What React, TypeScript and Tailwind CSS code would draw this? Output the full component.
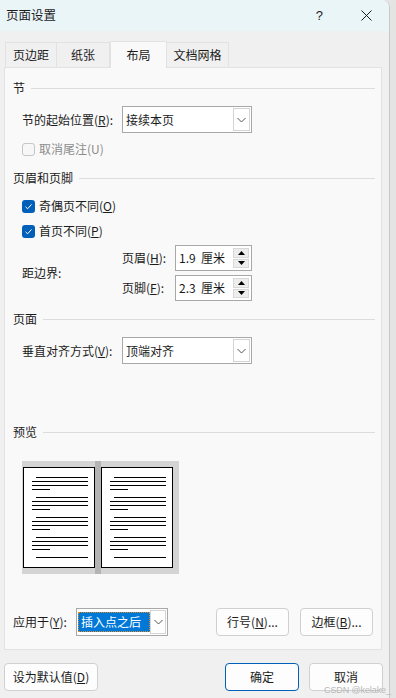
import React from 'react';

const font = { fontFamily: '"Noto Sans CJK SC", "Noto Sans", sans-serif' };

function Heading({ text, mt }: { text: string; mt: string }) {
  return (
    <div className={`flex items-center h-[16px] pl-[8px] pr-[6px] gap-[6px] ${mt}`}>
      <span className="shrink-0">{text}</span>
      <div className="flex-1 h-px bg-[#dcdcdc]" />
    </div>
  );
}

function Check({ checked, disabled }: { checked?: boolean; disabled?: boolean }) {
  if (checked) {
    return (
      <span className="w-[13px] h-[13px] rounded-[3px] bg-[#005fb8] flex items-center justify-center shrink-0">
        <svg width="9" height="9" viewBox="0 0 9 9">
          <path d="M1.5 4.8 L3.6 6.8 L7.5 2.4" stroke="#fff" strokeWidth="1" fill="none" />
        </svg>
      </span>
    );
  }
  return (
    <span
      className={`w-[13px] h-[13px] rounded-[3px] border shrink-0 ${
        disabled ? 'border-[#c6c6c6] bg-[#f7f7f7]' : 'border-[#8a8a8a] bg-white'
      }`}
    />
  );
}

function Chevron() {
  return (
    <svg width="9" height="6" viewBox="0 0 9 6">
      <path d="M0.5 1 L4.5 5 L8.5 1" stroke="#555" strokeWidth="1" fill="none" />
    </svg>
  );
}

function Select({ value, w }: { value: string; w: string }) {
  return (
    <div className={`flex h-[27px] ${w} border border-[#a8a8a8] bg-white`}>
      <span className="flex-1 flex items-center pl-[3px]">{value}</span>
      <span className="w-[17px] my-[1px] mr-[1px] border border-[#d4d4d4] bg-white flex items-center justify-center">
        <Chevron />
      </span>
    </div>
  );
}

function Spin({ value }: { value: string }) {
  return (
    <div className="flex h-[26px] w-[77px] border border-[#a8a8a8] bg-white">
      <span className="flex-1 flex items-center pl-[3px] whitespace-pre">{value}</span>
      <div className="w-[16px] flex flex-col gap-px py-[2px] mr-[2px]">
        <span className="flex-1 bg-[#ededed] border border-[#d8d8d8] flex items-center justify-center">
          <svg width="7" height="4" viewBox="0 0 7 4"><path d="M0 4 L3.5 0 L7 4Z" fill="#000" /></svg>
        </span>
        <span className="flex-1 bg-[#ededed] border border-[#d8d8d8] flex items-center justify-center">
          <svg width="7" height="4" viewBox="0 0 7 4"><path d="M0 0 L3.5 4 L7 0Z" fill="#000" /></svg>
        </span>
      </div>
    </div>
  );
}

function Page() {
  const groups = [10, 30, 50, 70];
  return (
    <div className="w-[72px] h-[101px] bg-white border border-black mt-[6px] shrink-0">
      <svg width="70" height="99" viewBox="0 0 70 99">
        {groups.map((g) => (
          <g key={g} stroke="#000" strokeWidth="1">
            <line x1="12" x2="64" y1={g - 0.5} y2={g - 0.5} />
            <line x1="8" x2="64" y1={g + 3.5} y2={g + 3.5} />
            <line x1="8" x2="64" y1={g + 7.5} y2={g + 7.5} />
            <line x1="8" x2="26" y1={g + 11.5} y2={g + 11.5} />
          </g>
        ))}
        <line x1="12" x2="64" y1="89.5" y2="89.5" stroke="#000" strokeWidth="1" />
      </svg>
    </div>
  );
}

function Btn({ label, w, primary }: { label: React.ReactNode; w: string; primary?: boolean }) {
  return (
    <button
      className={`h-[28px] ${w} rounded-[4px] border bg-[#fdfdfd] flex items-center justify-center ${
        primary ? 'border-[#005fb8]' : 'border-[#d0d0d0]'
      }`}
    >
      {label}
    </button>
  );
}

export default function App() {
  return (
    <div className="w-[396px] h-[698px] bg-[#e4e4e4] flex overflow-hidden relative text-[12px] text-[#1b1b1b]" style={font}>
      <div className="w-[390px] h-full bg-[#f0f0f0] rounded-tr-[8px] border-r border-[#c8c8c8] flex flex-col overflow-hidden">
        {/* 标题栏 */}
        <div className="h-[31px] bg-[#eaf5f8] flex items-center pl-[6px] shrink-0">
          <span className="flex-1 text-[12.5px]">页面设置</span>
          <span className="text-[13px] mr-[38px]" style={{ fontFamily: '"Liberation Sans", sans-serif' }}>?</span>
          <svg width="11" height="11" viewBox="0 0 11 11" className="mr-[17px]">
            <path d="M0.5 0.5 L10.5 10.5 M10.5 0.5 L0.5 10.5" stroke="#1b1b1b" strokeWidth="1" />
          </svg>
        </div>

        {/* 选项卡 */}
        <div className="flex items-end pl-[5px] mt-[9px] h-[27px] shrink-0">
          <div className="w-[52px] h-[25px] border border-b-0 border-[#e2e2e2] flex items-center justify-center">页边距</div>
          <div className="w-[53px] h-[25px] border border-b-0 border-l-0 border-[#e2e2e2] flex items-center justify-center">纸张</div>
          <div className="w-[57px] h-[27px] border border-b-0 border-[#e2e2e2] bg-[#f9f9f9] flex items-center justify-center -mb-px relative z-10">布局</div>
          <div className="w-[62px] h-[25px] border border-b-0 border-l-0 border-[#e2e2e2] flex items-center justify-center">文档网格</div>
        </div>

        {/* 面板 */}
        <div className="ml-[4px] w-[378px] h-[583px] border border-[#e2e2e2] bg-[#f9f9f9] flex flex-col shrink-0">
          <Heading text="节" mt="mt-[12px]" />
          <div className="flex items-center mt-[10px] pl-[17px]">
            <span className="w-[100px]">节的起始位置(<u>R</u>):</span>
            <Select value="接续本页" w="w-[130px]" />
          </div>
          <div className="flex items-center gap-[4px] mt-[8px] pl-[17px] h-[16px] text-[#8c8c8c]">
            <Check disabled />
            <span>取消尾注(U)</span>
          </div>

          <Heading text="页眉和页脚" mt="mt-[13px]" />
          <div className="flex items-center gap-[4px] mt-[12px] pl-[17px] h-[16px]">
            <Check checked />
            <span>奇偶页不同(<u>O</u>)</span>
          </div>
          <div className="flex items-center gap-[4px] mt-[9px] pl-[17px] h-[16px]">
            <Check checked />
            <span>首页不同(<u>P</u>)</span>
          </div>
          <div className="flex items-center mt-[6px] pl-[17px]">
            <span className="w-[100px]">距边界:</span>
            <div className="flex flex-col gap-[4px]">
              <div className="flex items-center">
                <span className="w-[53px]">页眉(<u>H</u>):</span>
                <Spin value="1.9  厘米" />
              </div>
              <div className="flex items-center">
                <span className="w-[53px]">页脚(<u>F</u>):</span>
                <Spin value="2.3  厘米" />
              </div>
            </div>
          </div>

          <Heading text="页面" mt="mt-[10px]" />
          <div className="flex items-center mt-[10px] pl-[17px]">
            <span className="w-[100px]">垂直对齐方式(<u>V</u>):</span>
            <Select value="顶端对齐" w="w-[130px]" />
          </div>

          <Heading text="预览" mt="mt-[60px]" />
          <div className="ml-[17px] mt-[21px] w-[157px] h-[113px] bg-[#d4d4d4] flex pl-px">
            <Page />
            <div className="w-[6px] h-full bg-[#b4b4b4] shrink-0" />
            <Page />
          </div>

          <div className="flex items-center mt-[34px] pl-[8px]">
            <span className="w-[63px]">应用于(<u>Y</u>):</span>
            <div className="flex h-[28px] w-[92px] border border-[#a8a8a8] bg-white">
              <span className="flex-1 flex items-center py-[3px] pl-px">
                <span className="h-full w-[72px] bg-[#0078d7] text-white border border-dotted border-[#e08a2c] flex items-center pl-[2px]">
                  插入点之后
                </span>
              </span>
              <span className="w-[17px] my-[1px] mr-[1px] border border-[#d4d4d4] bg-white flex items-center justify-center">
                <Chevron />
              </span>
            </div>
            <div className="ml-[48px]">
              <Btn label={<span>行号(<u>N</u>)...</span>} w="w-[73px]" />
            </div>
            <div className="ml-[11px]">
              <Btn label={<span>边框(<u>B</u>)...</span>} w="w-[73px]" />
            </div>
          </div>
        </div>

        {/* 底部按钮 */}
        <div className="flex items-center mt-[13px] pl-[4px]">
          <Btn label={<span>设为默认值(<u>D</u>)</span>} w="w-[94px]" />
          <div className="ml-[127px]">
            <Btn label="确定" w="w-[74px]" primary />
          </div>
          <div className="ml-[10px]">
            <Btn label="取消" w="w-[74px]" />
          </div>
        </div>
      </div>
      <div
        className="absolute left-[324px] top-[684px] text-[9px] leading-[12px] tracking-[-0.1px] whitespace-nowrap text-[#b8b8b8]"
        style={{ fontFamily: '"Liberation Sans", sans-serif' }}
      >
        CSDN @kelake_
      </div>
    </div>
  );
}
